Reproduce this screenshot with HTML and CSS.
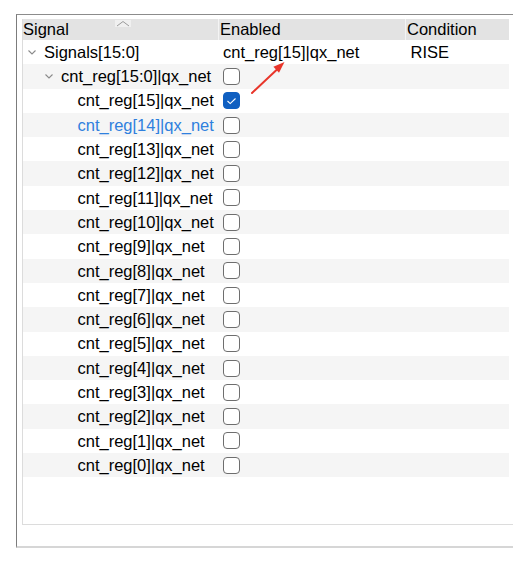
FILE: index.html
```html
<!DOCTYPE html>
<html>
<head>
<meta charset="utf-8">
<link rel="stylesheet" href="styles.css">
</head>
<body>
<div class="frame">
  <div class="inner">
    <div class="table">
      <div class="head">
        <div class="hcell c1">Signal
          <svg class="sort" width="16" height="7" viewBox="0 0 16 7"><polyline points="2,6 8,1.5 14,6" fill="none" stroke="#9a9a9a" stroke-width="1"/></svg>
        </div>
        <div class="hcell c2">Enabled</div>
        <div class="hcell c3">Condition</div>
      </div>

      <div class="row">
        <div class="cell c1 l0"><span class="tw"><svg width="8" height="5" viewBox="0 0 8 5"><polyline points="0.5,0.5 4,4 7.5,0.5" fill="none" stroke="#8a8a8a" stroke-width="1.1"/></svg></span>Signals[15:0]</div>
        <div class="cell c2 txt">cnt_reg[15]|qx_net</div>
        <div class="cell c3 txt3">RISE</div>
      </div>
      <div class="row alt">
        <div class="cell c1 l1"><span class="tw"><svg width="8" height="5" viewBox="0 0 8 5"><polyline points="0.5,0.5 4,4 7.5,0.5" fill="none" stroke="#8a8a8a" stroke-width="1.1"/></svg></span>cnt_reg[15:0]|qx_net</div>
        <div class="cell c2"><span class="cb"></span></div>
        <div class="cell c3"></div>
      </div>
      <div class="row">
        <div class="cell c1 l2">cnt_reg[15]|qx_net</div>
        <div class="cell c2"><span class="cb on"><svg width="11" height="8" viewBox="0 0 11 8"><polyline points="1.5,4 4.2,6.6 9.5,1.5" fill="none" stroke="#fff" stroke-width="1.1"/></svg></span></div>
        <div class="cell c3"></div>
      </div>
      <div class="row alt">
        <div class="cell c1 l2 blue">cnt_reg[14]|qx_net</div>
        <div class="cell c2"><span class="cb"></span></div>
        <div class="cell c3"></div>
      </div>
      <div class="row">
        <div class="cell c1 l2">cnt_reg[13]|qx_net</div>
        <div class="cell c2"><span class="cb"></span></div>
        <div class="cell c3"></div>
      </div>
      <div class="row alt">
        <div class="cell c1 l2">cnt_reg[12]|qx_net</div>
        <div class="cell c2"><span class="cb"></span></div>
        <div class="cell c3"></div>
      </div>
      <div class="row">
        <div class="cell c1 l2">cnt_reg[11]|qx_net</div>
        <div class="cell c2"><span class="cb"></span></div>
        <div class="cell c3"></div>
      </div>
      <div class="row alt">
        <div class="cell c1 l2">cnt_reg[10]|qx_net</div>
        <div class="cell c2"><span class="cb"></span></div>
        <div class="cell c3"></div>
      </div>
      <div class="row">
        <div class="cell c1 l2">cnt_reg[9]|qx_net</div>
        <div class="cell c2"><span class="cb"></span></div>
        <div class="cell c3"></div>
      </div>
      <div class="row alt">
        <div class="cell c1 l2">cnt_reg[8]|qx_net</div>
        <div class="cell c2"><span class="cb"></span></div>
        <div class="cell c3"></div>
      </div>
      <div class="row">
        <div class="cell c1 l2">cnt_reg[7]|qx_net</div>
        <div class="cell c2"><span class="cb"></span></div>
        <div class="cell c3"></div>
      </div>
      <div class="row alt">
        <div class="cell c1 l2">cnt_reg[6]|qx_net</div>
        <div class="cell c2"><span class="cb"></span></div>
        <div class="cell c3"></div>
      </div>
      <div class="row">
        <div class="cell c1 l2">cnt_reg[5]|qx_net</div>
        <div class="cell c2"><span class="cb"></span></div>
        <div class="cell c3"></div>
      </div>
      <div class="row alt">
        <div class="cell c1 l2">cnt_reg[4]|qx_net</div>
        <div class="cell c2"><span class="cb"></span></div>
        <div class="cell c3"></div>
      </div>
      <div class="row">
        <div class="cell c1 l2">cnt_reg[3]|qx_net</div>
        <div class="cell c2"><span class="cb"></span></div>
        <div class="cell c3"></div>
      </div>
      <div class="row alt">
        <div class="cell c1 l2">cnt_reg[2]|qx_net</div>
        <div class="cell c2"><span class="cb"></span></div>
        <div class="cell c3"></div>
      </div>
      <div class="row">
        <div class="cell c1 l2">cnt_reg[1]|qx_net</div>
        <div class="cell c2"><span class="cb"></span></div>
        <div class="cell c3"></div>
      </div>
      <div class="row alt">
        <div class="cell c1 l2">cnt_reg[0]|qx_net</div>
        <div class="cell c2"><span class="cb"></span></div>
        <div class="cell c3"></div>
      </div>
    </div>
  </div>
</div>
<svg class="arrow" width="531" height="564" viewBox="0 0 531 564">
  <line x1="252" y1="93" x2="277" y2="69.5" stroke="#e8352a" stroke-width="2" stroke-linecap="round"/>
  <polygon points="284.5,62 279,72.8 273.4,66.8" fill="#e8352a"/>
</svg>
</body>
</html>
```

FILE: styles.css
```css
html, body {
  margin: 0;
  padding: 0;
  background: #ffffff;
}
body {
  font-family: "Liberation Sans", Arial, sans-serif;
  font-size: 16.5px;
  color: #000000;
  position: relative;
  width: 531px;
  height: 564px;
  overflow: hidden;
}
.frame {
  margin-left: 16px;
  margin-top: 14px;
  width: 496px;
  border-top: 1px solid #8c8c8c;
  border-left: 1px solid #7c7c7c;
  border-bottom: 2px solid #d6d6d6;
  padding-top: 4px;
  padding-bottom: 21px;
}
.inner {
  margin-left: 5px;
  height: 506px;
  border-left: 1px solid #dcdcdc;
  border-bottom: 1px solid #dcdcdc;
  box-sizing: border-box;
}
.table {
  width: 486px;
}
.head {
  display: grid;
  grid-template-columns: 195px 187px 104px;
  height: 21px;
  background: #e3e3e3;
}
.hcell {
  display: flex;
  align-items: center;
  position: relative;
  line-height: 1;
}
.hcell.c1 { padding-left: 0px; }
.hcell.c2 { padding-left: 1px; border-left: 1px solid #f4f4f4; }
.hcell.c3 { padding-left: 1px; border-left: 1px solid #f4f4f4; }
.sort {
  position: absolute;
  left: 92px;
  top: 1px;
  background: #f0f0f0;
}
.row {
  display: grid;
  grid-template-columns: 195px 187px 104px;
  height: 24.3px;
}
.row.alt {
  background: #f5f5f5;
}
.cell {
  display: flex;
  align-items: center;
  white-space: nowrap;
  line-height: 1;
}
.c1.l0 { padding-left: 0; }
.c1.l1 { padding-left: 17px; }
.c1.l2 { padding-left: 54.5px; }
.tw {
  display: inline-flex;
  align-items: center;
  width: 16px;
  padding-left: 5px;
  height: 10px;
}
.tw svg { display: block; }
.blue { color: #2f80de; }
.txt { padding-left: 5px; }
.txt3 { padding-left: 5.5px; }
.c2 { padding-left: 4.5px; }
.c2.txt { padding-left: 5px; }
.cb {
  display: inline-flex;
  align-items: center;
  justify-content: center;
  width: 17px;
  height: 17px;
  box-sizing: border-box;
  border: 1px solid #6e6e6e;
  border-radius: 4px;
  background: #ffffff;
}
.cb.on {
  background: #0f5fc1;
  border-color: #0f5fc1;
}
.cb svg { display: block; }
.arrow {
  position: absolute;
  left: 0;
  top: 0;
  pointer-events: none;
}
```
